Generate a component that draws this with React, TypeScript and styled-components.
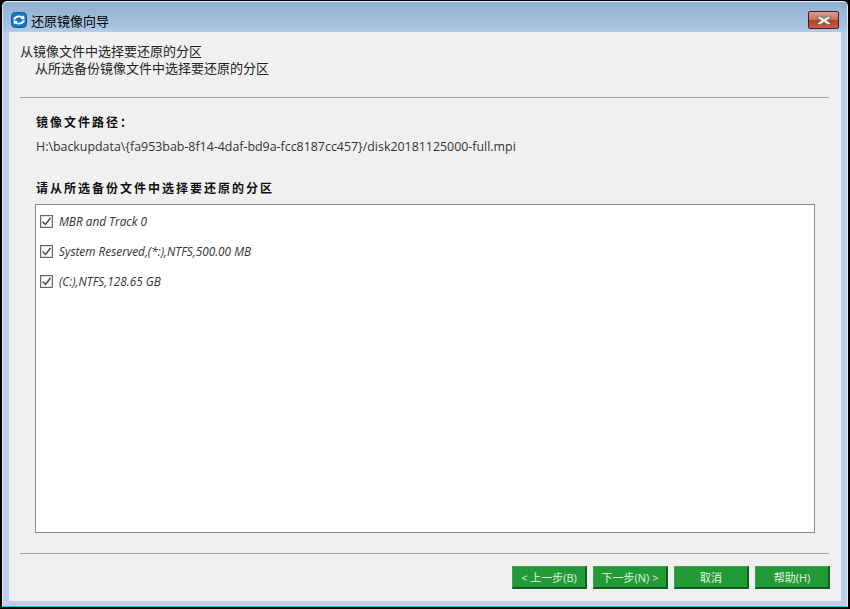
import * as React from "react";
import styled, {createGlobalStyle} from "styled-components";

const Global = createGlobalStyle`
    html, body {
        margin: 0;
        padding: 0;
        background: #000;
    }
    body {
        font-family: "Open Sans", "Noto Sans CJK SC", sans-serif;
    }
`;

const Screen = styled.div`
    width: 850px;
    height: 609px;
    box-sizing: border-box;
    padding: 1px 2px 2px 2px;
    background: #000;
    display: flex;
    overflow: hidden;
`;

const Window = styled.div`
    flex: 1;
    display: flex;
    flex-direction: column;
    border-radius: 5px 5px 0 0;
    border-top: 1px solid #e8eef4;
    border-left: 1px solid #dfe8f1;
    border-right: 1px solid #dfe8f1;
    border-bottom: 1px solid #22c4e0;
    background: linear-gradient(180deg, #8eafcf 0%, #a6c2df 24px, #b9d1ea 32px, #b9d1ea 100%);
`;

const TitleBar = styled.div`
    height: 30px;
    box-sizing: border-box;
    display: flex;
    align-items: center;
    padding: 6px 8px 0 8px;
    gap: 4px;
`;

const TitleText = styled.span`
    font-size: 13px;
    color: #000;
    flex: 1;
`;

const CloseButton = styled.div`
    width: 29px;
    height: 16px;
    border: 1px solid #4a1c2a;
    border-radius: 2px;
    display: flex;
    align-items: center;
    justify-content: center;
    background: linear-gradient(180deg, #d9a093 0%, #c9705f 48%, #b0402c 52%, #c9604a 100%);
`;

const Client = styled.div`
    flex: 1;
    margin: 0 6px 5px 6px;
    background: #f0f0f0;
    padding: 11px 11px 0 11px;
    display: flex;
    flex-direction: column;
`;

const Heading = styled.div`
    font-size: 13px;
    line-height: 17px;
    color: #222;
`;

const SubHeading = styled(Heading)`
    padding-left: 15px;
`;

const Rule = styled.div<{$top: number}>`
    height: 1px;
    background: #a0a0a0;
    margin-top: ${p => p.$top}px;
    margin-right: 1px;
`;

const Body = styled.div`
    padding: 0 15px 0 16px;
    display: flex;
    flex-direction: column;
`;

const Label = styled.div<{$top: number}>`
    font-size: 12px;
    font-weight: bold;
    line-height: 16px;
    letter-spacing: 2px;
    color: #111;
    margin-top: ${p => p.$top}px;
`;

const PathText = styled.div`
    font-size: 12.4px;
    line-height: 16px;
    color: #333;
    margin-top: 8px;
`;

const PartitionList = styled.div`
    height: 329px;
    margin-top: 7px;
    margin-left: -1px;
    box-sizing: border-box;
    border: 1px solid #8a8a92;
    background: #fff;
    padding: 1px 4px;
    display: flex;
    flex-direction: column;
`;

const PartitionRow = styled.div`
    height: 30px;
    display: flex;
    align-items: center;
    gap: 6px;
`;

const CheckBox = styled.div`
    width: 11px;
    height: 11px;
    border: 1px solid #666;
    outline: 1px solid #ddd;
    outline-offset: -2px;
    background: #fff;
    display: flex;
    align-items: center;
    justify-content: center;
`;

const PartitionName = styled.span`
    font-size: 11.8px;
    font-style: italic;
    color: #333;
`;

const Footer = styled.div`
    display: flex;
    justify-content: flex-end;
    gap: 6px;
    margin-top: 12px;
`;

const WizardButton = styled.div`
    width: 75px;
    height: 23px;
    box-sizing: border-box;
    background: #229a38;
    border-top: 1px solid #3aa850;
    border-left: 1px solid #3aa850;
    border-right: 2px solid #115a20;
    border-bottom: 2px solid #115a20;
    color: #e4f3e0;
    font-size: 11px;
    display: flex;
    align-items: center;
    justify-content: center;
    white-space: nowrap;
`;

function AppIcon() {
    return <svg width="16" height="16" viewBox="0 0 16 16">
        <rect x="0.5" y="0.5" width="15" height="15" rx="4" fill="#1478c8" stroke="#0c5c9e"/>
        <path d="M2 7.5 C3 3.5 9 2.5 11.5 4.5 L13 3.5 L13.5 7.5 L9.5 7 L10.5 5.8 C8.5 4.8 5.5 5.2 4.5 7.5 Z" fill="#fff"/>
        <path d="M14 8.5 C13 12.5 7 13.5 4.5 11.5 L3 12.5 L2.5 8.5 L6.5 9 L5.5 10.2 C7.5 11.2 10.5 10.8 11.5 8.5 Z" fill="#fff"/>
    </svg>;
}

function CheckMark() {
    return <svg width="11" height="11" viewBox="0 0 11 11">
        <path d="M1.5 5.5 L4.5 8.5 L9.5 2" fill="none" stroke="#444" strokeWidth="1.4"/>
    </svg>;
}

const partitions = ["MBR and Track 0", "System Reserved,(*:),NTFS,500.00 MB", "(C:),NTFS,128.65 GB"];
const buttons = ["< 上一步(B)", "下一步(N) >", "取消", "帮助(H)"];

export default function App() {
    return <Screen>
        <Global/>
        <Window>
            <TitleBar>
                <AppIcon/>
                <TitleText>还原镜像向导</TitleText>
                <CloseButton>
                    <svg width="16" height="11" viewBox="0 0 16 11">
                        <path d="M3.5 1 L8 3.5 L12.5 1 L15 2.5 L11 5.5 L15 8.5 L12.5 10 L8 7.5 L3.5 10 L1 8.5 L5 5.5 L1 2.5 Z" fill="#eee" stroke="#555" strokeWidth="0.8"/>
                    </svg>
                </CloseButton>
            </TitleBar>
            <Client>
                <Heading>从镜像文件中选择要还原的分区</Heading>
                <SubHeading>从所选备份镜像文件中选择要还原的分区</SubHeading>
                <Rule $top={20}/>
                <Body>
                    <Label $top={17}>镜像文件路径：</Label>
                    <PathText>H:\backupdata\{"{"}fa953bab-8f14-4daf-bd9a-fcc8187cc457{"}"}/disk20181125000-full.mpi</PathText>
                    <Label $top={26}>请从所选备份文件中选择要还原的分区</Label>
                    <PartitionList>
                        {partitions.map(name => <PartitionRow key={name}>
                            <CheckBox><CheckMark/></CheckBox>
                            <PartitionName>{name}</PartitionName>
                        </PartitionRow>)}
                    </PartitionList>
                </Body>
                <Rule $top={20}/>
                <Footer>
                    {buttons.map(label => <WizardButton key={label}>{label}</WizardButton>)}
                </Footer>
            </Client>
        </Window>
    </Screen>;
}
